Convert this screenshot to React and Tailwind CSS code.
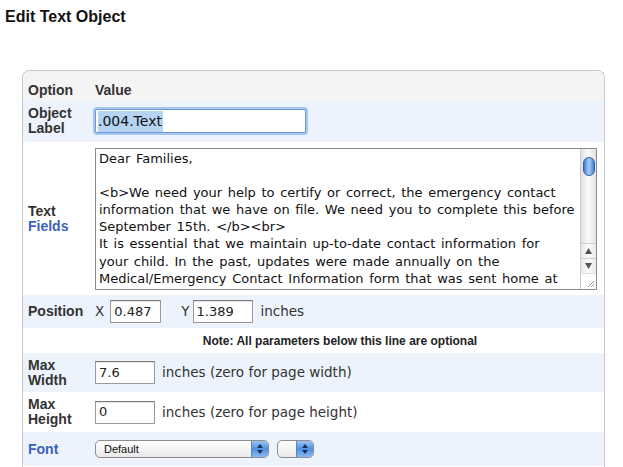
import React from 'react'

const SANS = 'font-["Liberation_Sans",Arial,sans-serif]'
const LUCIDA = 'font-["DejaVu_Sans","Liberation_Sans",sans-serif]'

const LINES = [
  'Dear Families,',
  '',
  '<b>We need your help to certify or correct, the emergency contact',
  'information that we have on file. We need you to complete this before',
  'September 15th. </b><br>',
  'It is essential that we maintain up-to-date contact information for',
  'your child. In the past, updates were made annually on the',
  'Medical/Emergency Contact Information form that was sent home at',
]

function Label({ children, blue }) {
  return (
    <div className={`w-[72px] shrink-0 pl-[5px] ${SANS} text-[14px] font-bold leading-[15px] ${blue ? 'text-[#3a63b8]' : 'text-[#333]'}`}>
      {children}
    </div>
  )
}

function Field({ value, w }) {
  return (
    <div className={`${w} h-[23px] flex items-center bg-white border border-[#9a9a9a] border-t-[#7a7a7a] pl-[3px] ${LUCIDA} text-[13px] text-[#222] shadow-[inset_0_1px_1px_rgba(0,0,0,0.12)]`}>
      {value}
    </div>
  )
}

function Stepper({ className }) {
  return (
    <div className={`flex flex-col items-center justify-center gap-[2px] h-full rounded-r-[4px] bg-gradient-to-b from-[#9cc3f2] via-[#4c8fe3] to-[#8bb8ef] border-l border-[#5b86c4] ${className}`}>
      <svg width="6" height="4" viewBox="0 0 6 4"><path d="M3 0 L6 4 L0 4 Z" fill="#1d2f52" /></svg>
      <svg width="6" height="4" viewBox="0 0 6 4"><path d="M0 0 L6 0 L3 4 Z" fill="#1d2f52" /></svg>
    </div>
  )
}

function Scrollbar() {
  return (
    <div className="w-[16px] shrink-0 flex flex-col border-l border-[#c9c9c9] bg-[#f4f4f4]">
      <div className="flex-1 relative bg-gradient-to-r from-[#e2e2e2] via-[#fafafa] to-[#e2e2e2]">
        <div className="absolute left-[2px] top-[8px] w-[12px] h-[19px] rounded-full border border-[#2f5fa6] bg-gradient-to-r from-[#3f7fd6] via-[#a9cdf6] to-[#3f7fd6]" />
      </div>
      <div className="h-[15px] flex items-center justify-center border-t border-[#cfcfcf] bg-gradient-to-r from-[#e8e8e8] via-[#fbfbfb] to-[#e8e8e8]">
        <svg width="7" height="6" viewBox="0 0 7 6"><path d="M3.5 0 L7 6 L0 6 Z" fill="#555" /></svg>
      </div>
      <div className="h-[15px] flex items-center justify-center border-t border-[#cfcfcf] bg-gradient-to-r from-[#e8e8e8] via-[#fbfbfb] to-[#e8e8e8]">
        <svg width="7" height="6" viewBox="0 0 7 6"><path d="M0 0 L7 0 L3.5 6 Z" fill="#555" /></svg>
      </div>
      <div className="h-[16px] flex items-end justify-end bg-white border-t border-[#e0e0e0] pr-[1px] pb-[1px]">
        <svg width="9" height="9" viewBox="0 0 9 9">
          <path d="M8 2 L2 8 M8 5 L5 8" stroke="#999" strokeWidth="1" />
        </svg>
      </div>
    </div>
  )
}

export default function App() {
  return (
    <div className={`w-[623px] h-[467px] overflow-hidden bg-white ${SANS} text-[#222]`}>
      <h1 className="pt-[8px] pl-[5px] text-[16px] font-bold leading-[18px] text-[#111]">Edit Text Object</h1>

      {/* options panel */}
      <div className="mt-[44px] ml-[22px] w-[583px] h-[420px] border border-[#c8c8c8] border-b-0 rounded-t-[8px] overflow-hidden">
        <div className="h-[29px] flex items-center pt-[9px] bg-[#f4f4f4] text-[14px] font-bold text-[#333]">
          <div className="w-[72px] pl-[5px]">Option</div>
          <div>Value</div>
        </div>

        <div className="h-[42px] flex items-center bg-[#edf3fc]">
          <Label>Object<br />Label</Label>
          <div className={`w-[211px] h-[24px] flex items-center bg-white border border-[#6d9ad6] rounded-[2px] shadow-[0_0_0_2px_#a7c6ee] pl-[2px] ${LUCIDA} text-[14px] text-[#111]`}>
            <span className="bg-[#b5d3f3] pr-px">.004.Text</span>
          </div>
        </div>

        <div className="h-[153px] flex items-center bg-white">
          <Label>Text<br /><span className="text-[#3a63b8]">Fields</span></Label>
          <div className="w-[502px] h-[142px] flex border border-[#8a8a8a] bg-white overflow-hidden">
            <div className={`flex-1 pl-[3px] pt-px ${LUCIDA} text-[13px] [word-spacing:1.5px] leading-[17.2px] text-[#111] whitespace-pre overflow-hidden`}>
              {LINES.map((l, i) => <div key={i} className="h-[17.2px]">{l}</div>)}
            </div>
            <Scrollbar />
          </div>
        </div>

        <div className={`h-[33px] flex items-center bg-[#edf3fc] ${LUCIDA} text-[13.5px] text-[#333]`}>
          <Label>Position</Label>
          <span className="mr-[6px]">X</span>
          <Field value="0.487" w="w-[51px]" />
          <span className="ml-[20px] mr-[3px]">Y</span>
          <Field value="1.389" w="w-[60px]" />
          <span className="ml-[8px]">inches</span>
        </div>

        <div className="h-[25px] flex items-center justify-center text-[12px] font-bold text-[#222] pl-[53px]">
          Note: All parameters below this line are optional
        </div>

        <div className={`h-[39px] flex items-center bg-[#edf3fc] ${LUCIDA} text-[13.5px] text-[#333]`}>
          <Label>Max<br />Width</Label>
          <Field value="7.6" w="w-[60px]" />
          <span className="ml-[7px]">inches (zero for page width)</span>
        </div>

        <div className={`h-[40px] flex items-center bg-white ${LUCIDA} text-[13.5px] text-[#333]`}>
          <Label>Max<br />Height</Label>
          <Field value="0" w="w-[60px]" />
          <span className="ml-[7px]">inches (zero for page height)</span>
        </div>

        <div className="h-[34px] flex items-center bg-[#edf3fc]">
          <Label blue>Font</Label>
          <div className="w-[174px] h-[18px] flex items-center rounded-[5px] border border-[#8e8e8e] bg-gradient-to-b from-white to-[#e9e9e9] overflow-hidden">
            <span className="flex-1 pl-[8px] text-[11px] text-[#111]">Default</span>
            <Stepper className="w-[17px]" />
          </div>
          <div className="ml-[8px] w-[37px] h-[18px] flex items-center rounded-[5px] border border-[#8e8e8e] bg-gradient-to-b from-white to-[#e9e9e9] overflow-hidden">
            <span className="flex-1" />
            <Stepper className="w-[17px]" />
          </div>
        </div>
      </div>
    </div>
  )
}
